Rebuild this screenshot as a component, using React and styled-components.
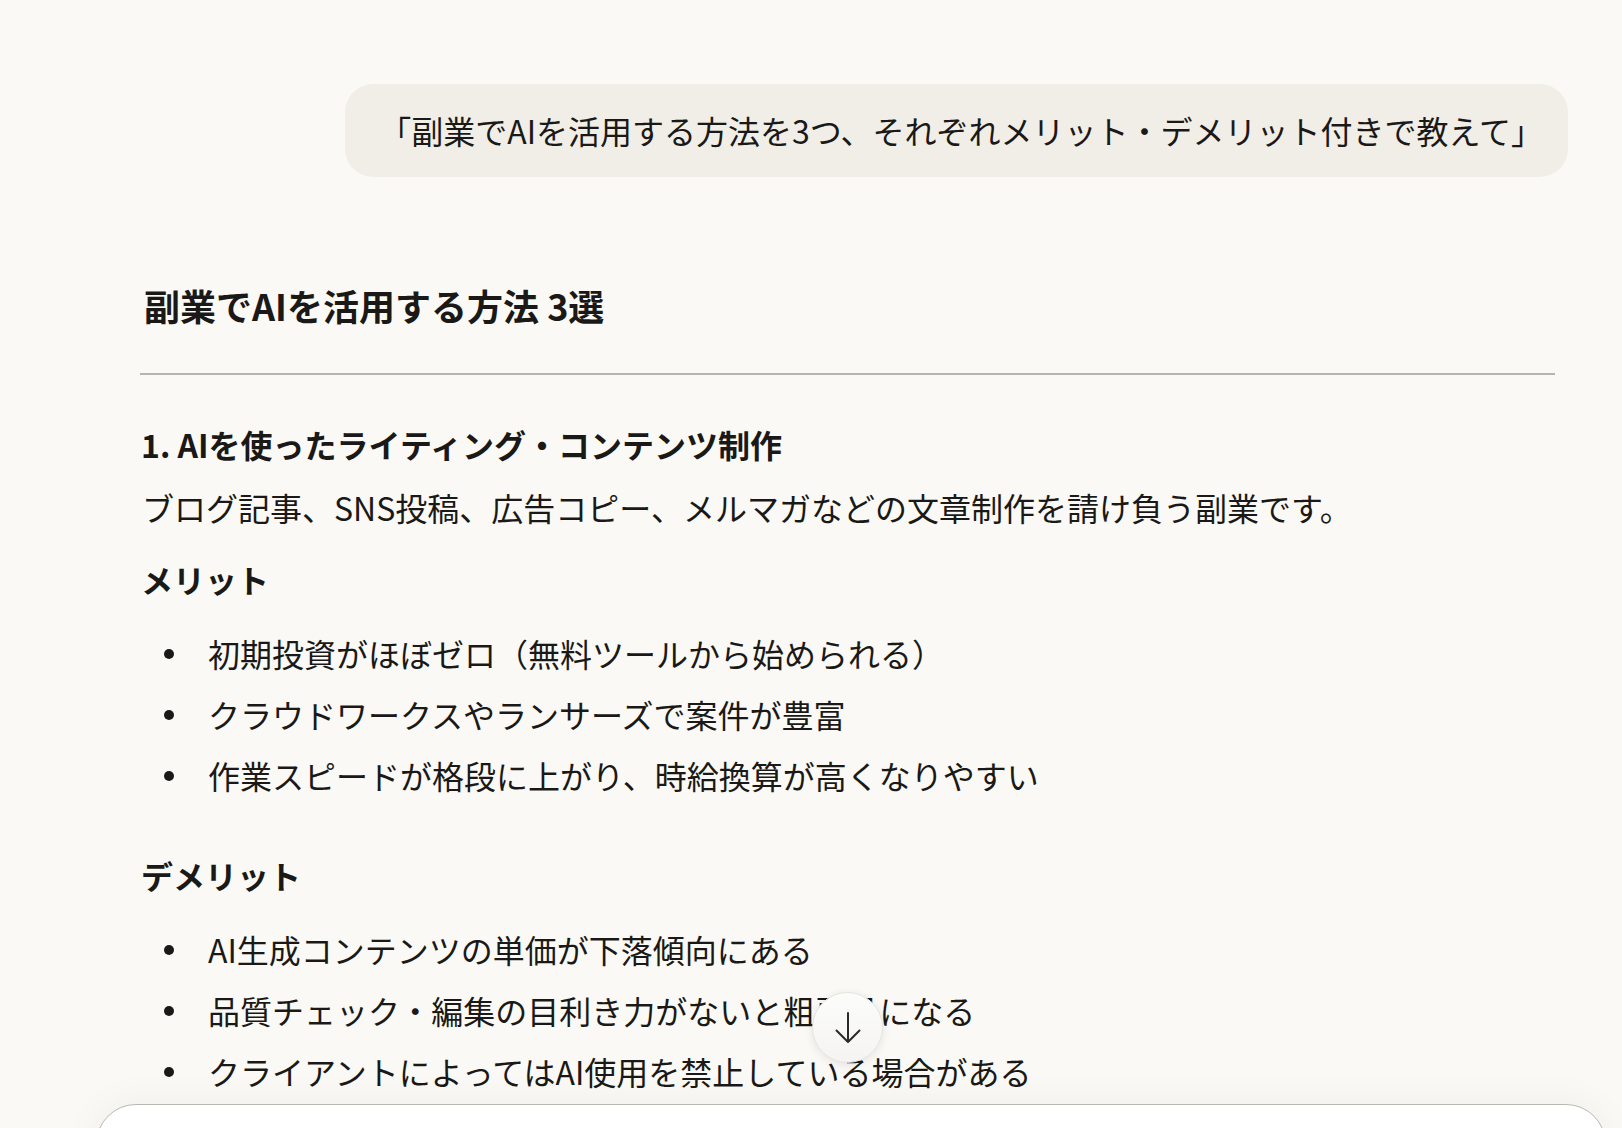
import styled, { createGlobalStyle } from "styled-components";

const GlobalStyle = createGlobalStyle`
  html, body {
    margin: 0;
    padding: 0;
    background: #faf9f5;
  }
  body {
    font-family: "Noto Sans CJK JP", "Noto Sans", sans-serif;
    color: #1a1917;
  }
`;

const merits = [
  "初期投資がほぼゼロ（無料ツールから始められる）",
  "クラウドワークスやランサーズで案件が豊富",
  "作業スピードが格段に上がり、時給換算が高くなりやすい",
];

const demerits = [
  "AI生成コンテンツの単価が下落傾向にある",
  "品質チェック・編集の目利き力がないと粗悪品になる",
  "クライアントによってはAI使用を禁止している場合がある",
];

export default function App() {
  return (
    <Page>
      <GlobalStyle />
      <UserRow>
        <Bubble>「副業でAIを活用する方法を3つ、それぞれメリット・デメリット付きで教えて」</Bubble>
      </UserRow>

      <Answer>
        <Title>副業でAIを活用する方法 3選</Title>
        <Rule />
        <Section>1. AIを使ったライティング・コンテンツ制作</Section>
        <Para>ブログ記事、SNS投稿、広告コピー、メルマガなどの文章制作を請け負う副業です。</Para>

        <Label>メリット</Label>
        <List>
          {merits.map((t) => (
            <Item key={t}>
              <Dot />
              {t}
            </Item>
          ))}
        </List>

        <Label $gap="52px">デメリット</Label>
        <List>
          {demerits.map((t) => (
            <Item key={t}>
              <Dot />
              {t}
            </Item>
          ))}
        </List>
      </Answer>

      <ScrollButton aria-label="scroll down">
        <svg width="26" height="32" viewBox="0 0 26 32" fill="none">
          <path
            d="M13 1v29M1.5 18.5 13 30l11.5-11.5"
            stroke="#2a2926"
            strokeWidth="2"
            strokeLinecap="round"
            strokeLinejoin="round"
          />
        </svg>
      </ScrollButton>
      <Composer />
    </Page>
  );
}

const Page = styled.div`
  min-height: 1128px;
  padding-top: 84px;
  box-sizing: border-box;
  overflow: hidden;
`;

const UserRow = styled.div`
  display: flex;
  justify-content: flex-end;
  padding-right: 54px;
`;

const Bubble = styled.div`
  background: #f0eee6;
  border-radius: 28px;
  padding: 23px 25px 23px 34px;
  font-size: 32px;
  line-height: 47px;
  white-space: nowrap;
`;

const Answer = styled.div`
  padding: 0 67px 0 140px;
  margin-top: 105px;
`;

const Title = styled.h2`
  margin: 0;
  font-size: 36px;
  line-height: 47px;
  font-weight: 700;
  padding-left: 4px;
`;

const Rule = styled.hr`
  border: 0;
  height: 1.5px;
  background: #b7b5b0;
  margin: 44px 0 46px;
`;

const Section = styled.h3`
  margin: 0;
  font-size: 32px;
  line-height: 47px;
  font-weight: 600;
  padding-left: 1px;
`;

const Para = styled.p`
  margin: 16px 0 0;
  font-size: 32px;
  line-height: 47px;
  padding-left: 2px;
`;

const Label = styled.div`
  margin-top: ${(p) => p.$gap || "25px"};
  font-size: 32px;
  line-height: 47px;
  font-weight: 700;
  padding-left: 1px;
`;

const List = styled.ul`
  list-style: none;
  margin: 25px 0 0;
  padding: 0;
  display: flex;
  flex-direction: column;
  gap: 11px;
`;

const Item = styled.li`
  display: flex;
  align-items: center;
  font-size: 32px;
  line-height: 50px;
  white-space: nowrap;
`;

const Dot = styled.span`
  width: 10px;
  height: 10px;
  border-radius: 50%;
  background: #1a1917;
  margin: 3px 34px 0 24px;
  flex-shrink: 0;
`;

const ScrollButton = styled.button`
  position: fixed;
  left: 812px;
  top: 992px;
  width: 71px;
  height: 71px;
  border-radius: 50%;
  border: 1px solid #e4e2dc;
  background: linear-gradient(180deg, #fcfcfb 0%, #f5f4f2 100%);
  box-shadow: 0 2px 10px rgba(0, 0, 0, 0.09);
  display: flex;
  align-items: center;
  justify-content: center;
  padding: 0;
  z-index: 3;
  cursor: pointer;
`;

const Composer = styled.div`
  position: fixed;
  left: 96px;
  top: 1104px;
  width: 1508px;
  height: 140px;
  background: #fff;
  border: 1px solid #b9b7b1;
  border-radius: 40px;
  box-shadow: 0 0 40px rgba(0, 0, 0, 0.05);
  z-index: 2;
`;
